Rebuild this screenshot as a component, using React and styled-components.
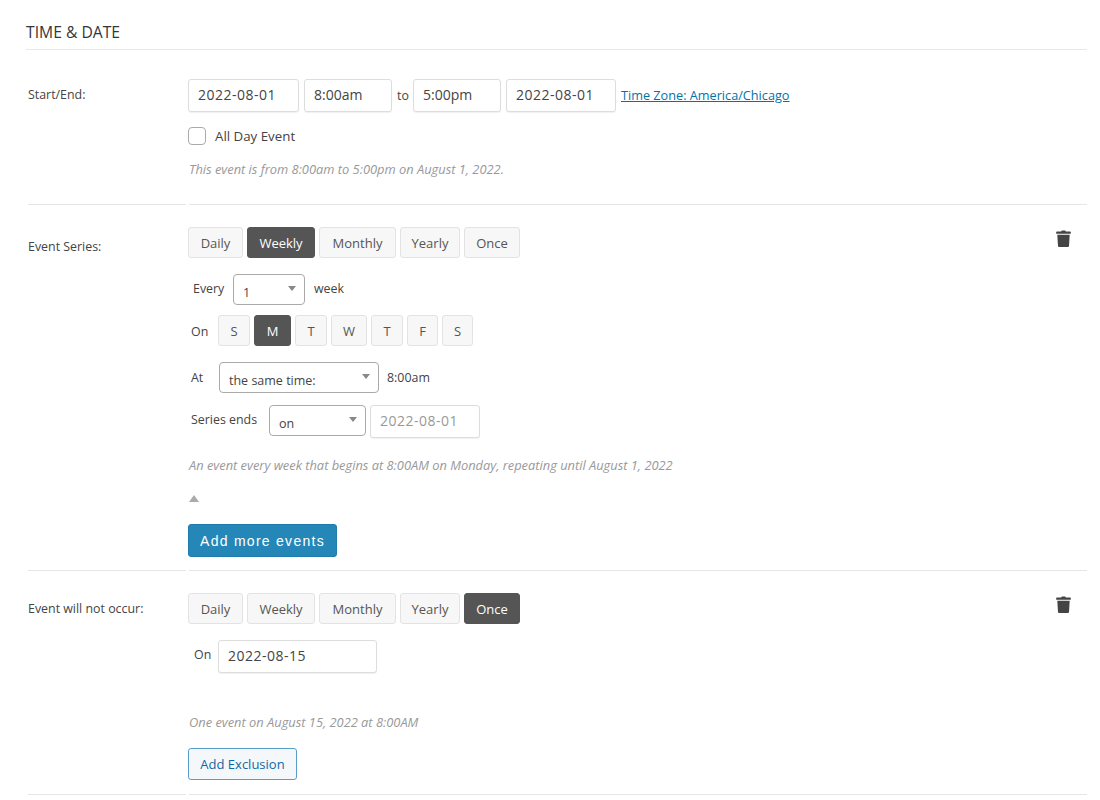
import React from "react";
import styled, { createGlobalStyle } from "styled-components";

const Global = createGlobalStyle`
  html, body { margin: 0; padding: 0; background: #fff; }
  body { font-family: "Open Sans", "Liberation Sans", sans-serif; color: #444; font-size: 12px; }
`;
const Page = styled.div`
  width: 1061px;
  padding: 24px 0 0 26px;
`;
const Heading = styled.h2`
  margin: 0;
  font-size: 15.7px;
  line-height: 16px;
  font-weight: 500;
  color: #32373c;
  padding-bottom: 9px;
  border-bottom: 1px solid #e8e8e8;
`;
const Row = styled.div`
  display: grid;
  grid-template-columns: 158px 898px;
  column-gap: 3px;
  margin-left: 2px;
  height: ${p => p.$h}px;
`;
const LabelCell = styled.div`
  border-bottom: 1px solid #e5e5e5;
  padding-top: ${p => p.$top}px;
  font-size: 12.4px;
  line-height: 18px;
  color: #444;
`;
const Body = styled.div`
  border-bottom: 1px solid #e5e5e5;
  padding: ${p => p.$top}px 16px 0 0;
  display: flex;
  justify-content: space-between;
  align-items: flex-start;
`;
const Col = styled.div`
  display: flex;
  flex-direction: column;
  align-items: flex-start;
  margin-left: -1px;
`;
const Line = styled.div`
  display: flex;
  align-items: ${p => p.$align || "center"};
  margin-top: ${p => p.$mt || 0}px;
  margin-left: ${p => p.$ml || 0}px;
`;
const Field = styled.input`
  box-sizing: border-box;
  width: ${p => p.$w}px;
  height: 33px;
  margin: 0 ${p => p.$mr || 0}px 0 ${p => p.$gl || 0}px;
  padding: 0 9px 2px;
  border: 1px solid #ddd;
  border-radius: 3px;
  box-shadow: 0 1px 1px rgba(0,0,0,.06);
  background: #fff;
  font: 14px "Open Sans", sans-serif;
  letter-spacing: ${p => p.$ls || 0}px;
  color: #444;
  outline: none;
  &:disabled { color: #999; opacity: 1; }
`;
const Word = styled.span`
  display: inline-block;
  width: ${p => p.$w ? p.$w + "px" : "auto"};
  margin-left: ${p => p.$ml || 0}px;
  margin-top: ${p => p.$mt || 0}px;
  font-size: 12.4px;
  line-height: 18px;
  color: #444;
  white-space: nowrap;
  flex: none;
`;
const TimeLink = styled.a`
  margin: -2px 0 0 5px;
  font-size: 12.7px;
  color: #0073aa;
  text-decoration: underline;
`;
const Check = styled.span`
  box-sizing: border-box;
  width: 18px;
  height: 18px;
  border: 1px solid #aaa;
  border-radius: 4px;
  background: #fff;
  margin-right: 9px;
`;
const CheckLabel = styled.span`
  font-size: 13.3px;
  line-height: 18px;
  color: #444;
`;
const Note = styled.p`
  margin: ${p => p.$mt}px 0 0 1px;
  font-size: 12.85px;
  line-height: 16px;
  font-style: italic;
  color: #999;
`;
const Segs = styled.div`
  display: flex;
  gap: 4px;
`;
const Seg = styled.button`
  box-sizing: border-box;
  height: 31px;
  width: ${p => p.$w}px;
  padding: 0;
  border: 1px solid ${p => (p.$on ? "#555" : "#e3e3e3")};
  border-radius: 3px;
  background: ${p => (p.$on ? "#555" : "#f7f7f7")};
  color: ${p => (p.$on ? "#fff" : "#555")};
  font: 13px "Open Sans", sans-serif;
`;
const Select = styled.div`
  box-sizing: border-box;
  width: ${p => p.$w}px;
  height: 31px;
  padding: 5px 8px 0 9px;
  border: 1px solid #aaa;
  border-radius: 4px;
  background: #fff;
  display: flex;
  justify-content: space-between;
  font-size: 12.5px;
  line-height: 26px;
  color: #444;
`;
const Caret = styled.i`
  width: 0;
  height: 0;
  margin-top: 6px;
  border-left: 4px solid transparent;
  border-right: 4px solid transparent;
  border-top: 5px solid #888;
`;
const Toggle = styled.i`
  display: block;
  width: 0;
  height: 0;
  margin: 22px 0 0 1px;
  border-left: 5px solid transparent;
  border-right: 5px solid transparent;
  border-bottom: 7px solid #aaa;
`;
const Primary = styled.button`
  box-sizing: border-box;
  width: 149px;
  height: 33px;
  margin-top: 22px;
  padding: 0;
  border: 1px solid #1f7cab;
  border-radius: 3px;
  background: #2487b8;
  color: #fff;
  font: 14px "Liberation Sans", Arial, sans-serif;
  letter-spacing: 1.27px;
`;
const Secondary = styled.button`
  box-sizing: border-box;
  width: 109px;
  height: 32px;
  margin-top: 18px;
  padding: 0;
  border: 1px solid #5b9dc9;
  border-radius: 3px;
  background: #f5f8fa;
  color: #0e69a8;
  font: 13px "Open Sans", sans-serif;
`;
const Trash = styled.svg`
  width: 15px;
  height: 17px;
  margin-top: 3px;
  fill: #444;
  flex: none;
`;

const TrashIcon = () => (
  <Trash viewBox="0 0 16 18">
    <path d="M5.5 1.5 6.2.4h3.6l.7 1.1H15a.8.8 0 0 1 .8.8V4H.2V2.3a.8.8 0 0 1 .8-.8z" />
    <path d="M1.4 5h13.2l-.7 11.7a1.3 1.3 0 0 1-1.3 1.3H3.4a1.3 1.3 0 0 1-1.3-1.3z" />
  </Trash>
);

const freq = [["Daily", 55], ["Weekly", 68], ["Monthly", 77], ["Yearly", 60], ["Once", 56]];
const days = [["S", 32], ["M", 37], ["T", 32], ["W", 36], ["T", 32], ["F", 31], ["S", 31]];

const Freq = ({ on }) => (
  <Segs>
    {freq.map(([t, w]) => (
      <Seg key={t} $w={w} $on={t === on}>{t}</Seg>
    ))}
  </Segs>
);

export default function App() {
  return (
    <>
      <Global />
      <Page>
        <Heading>TIME &amp; DATE</Heading>
        <Row $h={155}>
          <LabelCell $top={36}>Start/End:</LabelCell>
          <Body $top={29}>
            <Col>
              <Line>
                <Field $w={111} $mr={5} $ls={0.5} readOnly value="2022-08-01" />
                <Field $w={88} readOnly value="8:00am" />
                <Word $ml={5} $w={16}>to</Word>
                <Field $w={88} $mr={5} readOnly value="5:00pm" />
                <Field $w={110} $ls={0.5} readOnly value="2022-08-01" />
                <TimeLink href="#">Time Zone: America/Chicago</TimeLink>
              </Line>
              <Line $mt={15}>
                <Check />
                <CheckLabel>All Day Event</CheckLabel>
              </Line>
              <Note $mt={16}>This event is from 8:00am to 5:00pm on August 1, 2022.</Note>
            </Col>
          </Body>
        </Row>
        <Row $h={366}>
          <LabelCell $top={33}>Event Series:</LabelCell>
          <Body $top={22}>
            <Col>
              <Freq on="Weekly" />
              <Line $mt={16} $ml={5}>
                <Word $w={40} $mt={-2}>Every</Word>
                <Select $w={72}>1<Caret /></Select>
                <Word $ml={9} $mt={-2}>week</Word>
              </Line>
              <Line $mt={10} $ml={3}>
                <Word $w={27} $mt={2}>On</Word>
                <Segs>
                  {days.map(([t, w], i) => (
                    <Seg key={i} $w={w} $on={t === "M"}>{t}</Seg>
                  ))}
                </Segs>
              </Line>
              <Line $mt={16} $ml={3}>
                <Word $w={28}>At</Word>
                <Select $w={160}>the same time:<Caret /></Select>
                <Word $ml={8}>8:00am</Word>
              </Line>
              <Line $mt={12} $ml={3} $align="flex-start">
                <Word $w={78} $mt={6}>Series ends</Word>
                <Select $w={97}>on<Caret /></Select>
                <Field $w={110} $gl={4} $ls={0.5} disabled value="2022-08-01" />
              </Line>
              <Note $mt={19}>An event every week that begins at 8:00AM on Monday, repeating until August 1, 2022</Note>
              <Toggle />
              <Primary>Add more events</Primary>
            </Col>
            <TrashIcon />
          </Body>
        </Row>
        <Row $h={224}>
          <LabelCell $top={29}>Event will not occur:</LabelCell>
          <Body $top={22}>
            <Col>
              <Freq on="Once" />
              <Line $mt={16} $ml={6} $align="flex-start">
                <Word $w={24} $mt={6}>On</Word>
                <Field $w={159} $ls={0.5} readOnly value="2022-08-15" />
              </Line>
              <Note $mt={41}>One event on August 15, 2022 at 8:00AM</Note>
              <Secondary>Add Exclusion</Secondary>
            </Col>
            <TrashIcon />
          </Body>
        </Row>
      </Page>
    </>
  );
}
